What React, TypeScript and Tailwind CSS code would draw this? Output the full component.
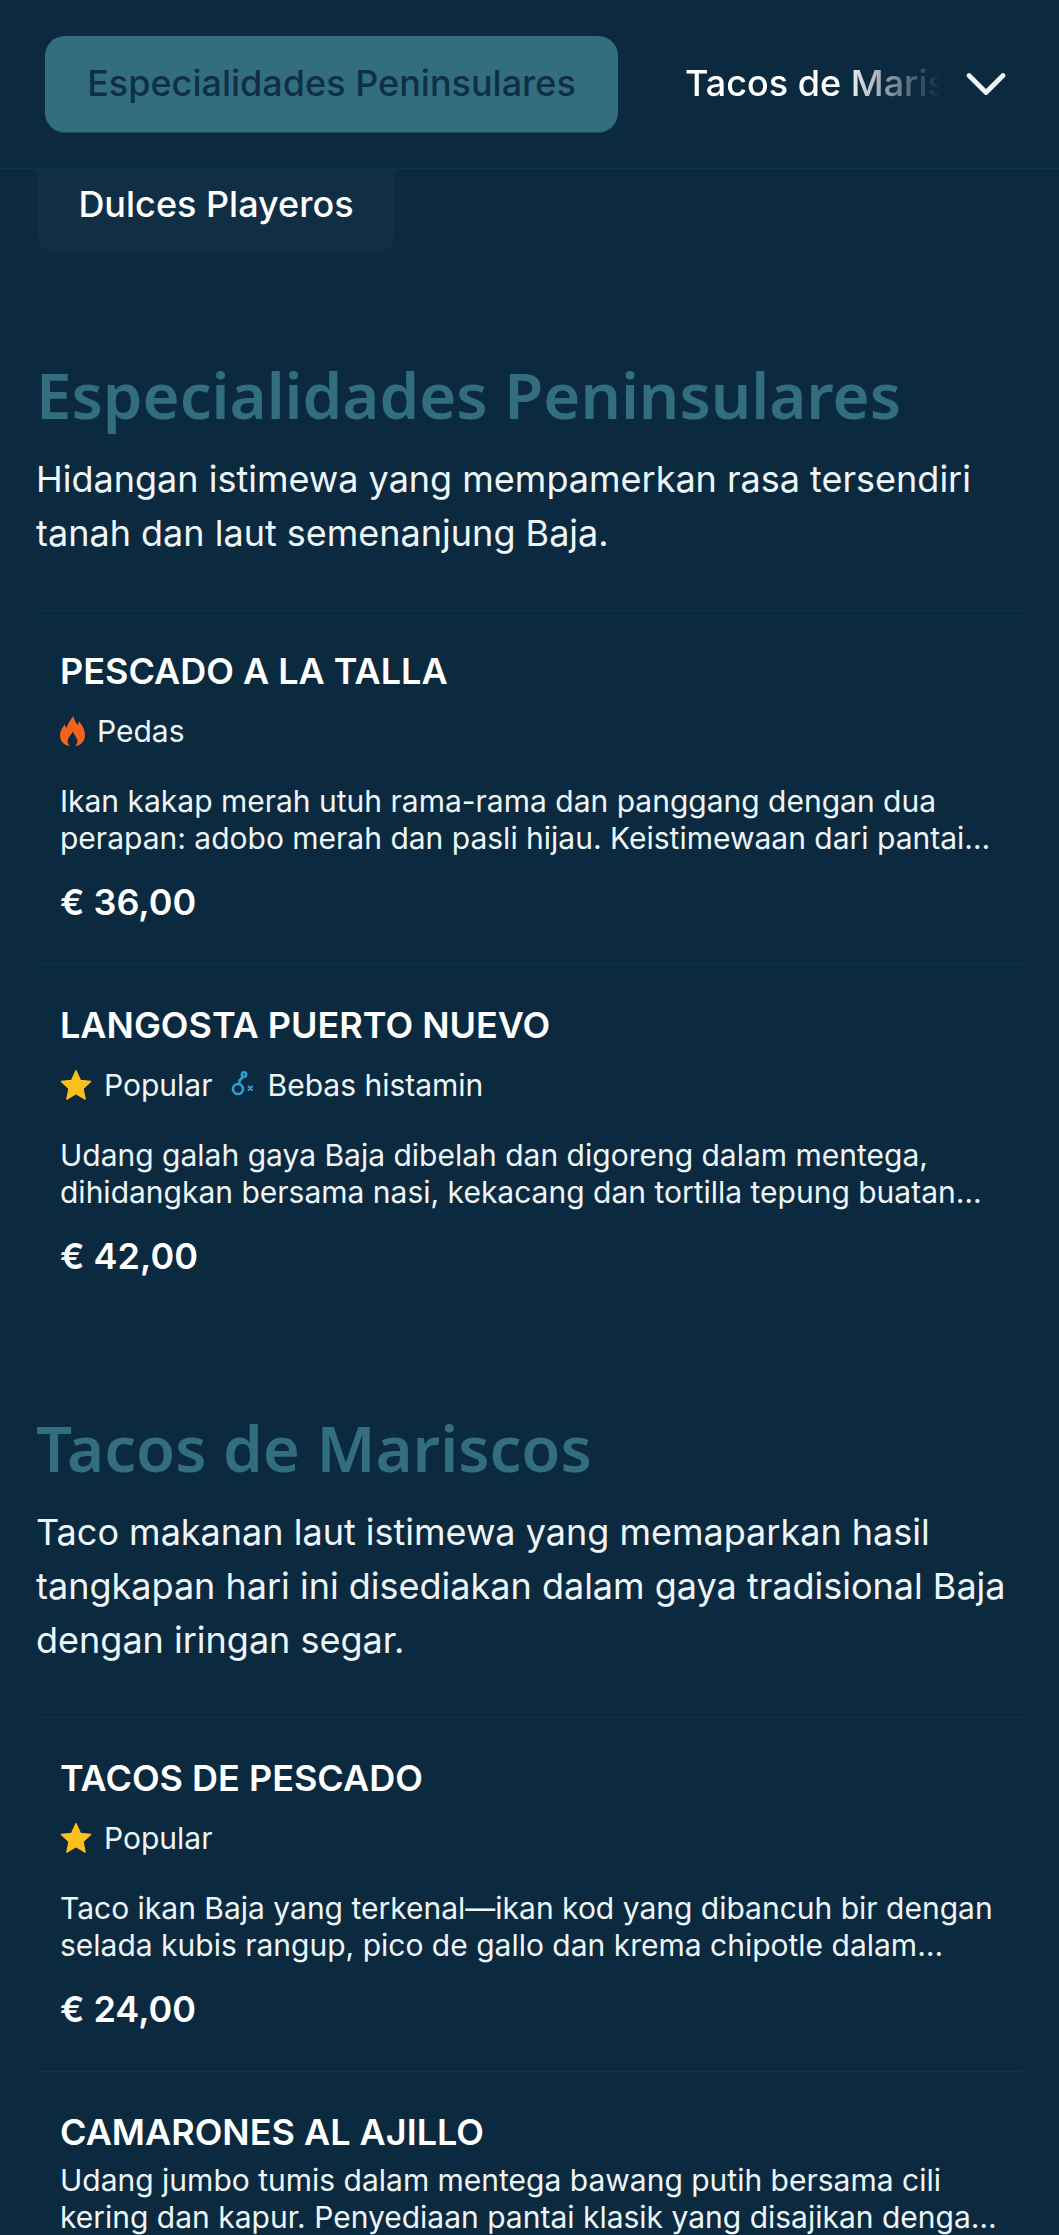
import { ChevronDown } from 'lucide-react';

function FlameIcon() {
  return (
    <svg viewBox="0 0 26 30" className="h-[30px] w-[25px] shrink-0 text-[#f4631e]" fill="currentColor" preserveAspectRatio="none">
      <path
        fillRule="evenodd"
        d="M14 0 C14.5 4 16.5 6.5 18 9 C19 7.8 19.6 6.8 19.8 5.5 C23.5 9.5 26 14 26 19 C26 25.5 21 30 15.5 30 C17.5 28.5 18.5 26.5 18 24 C17.4 21 14.5 19 13.5 15.5 C12 18.5 8.5 21 8 24.5 C7.7 27 8.8 28.8 10.5 30 C5 30 0 25.5 0 19.5 C0 15 2.5 11.5 5 8.5 C5.5 10 6 11 7 12 C8 7.5 11 3.5 14 0 Z"
      />
    </svg>
  );
}

function StarIcon() {
  return (
    <svg viewBox="0 0 30 30" className="h-[32px] w-[32px] shrink-0 text-[#fcc01e]" fill="currentColor" stroke="currentColor" strokeWidth="1.2" strokeLinejoin="round">
      <path d="M15 1.5 L19.1 10.6 L28.8 11.7 L21.6 18.4 L23.6 28.2 L15 23.2 L6.4 28.2 L8.4 18.4 L1.2 11.7 L10.9 10.6 Z" />
    </svg>
  );
}

function HistamineIcon() {
  return (
    <svg viewBox="0 0 26 30" className="h-[30px] w-[26px] shrink-0 text-[#2a9fd6]" fill="none" stroke="currentColor" strokeWidth="2.6" strokeLinecap="round">
      <circle cx="8" cy="19" r="5" />
      <path d="M9.5 14 L9.5 10.5 L13 7" />
      <circle cx="14" cy="4.5" r="2.2" />
      <path d="M18.5 16.5 L22 20 M22 16.5 L18.5 20" strokeWidth="2" />
    </svg>
  );
}

const tagIcons = {
  Pedas: <FlameIcon />,
  Popular: <StarIcon />,
  'Bebas histamin': <HistamineIcon />,
};

type Tag = keyof typeof tagIcons;

interface Dish {
  name: string;
  tags: Tag[];
  desc: string;
  price?: string;
}

function DishCard({ dish }: { dish: Dish }) {
  return (
    <div className="border-t border-[#12324a] pt-[38px] pr-[23px] pb-[39px] pl-[20px]">
      <h3 className="text-[36px] leading-[44px] font-semibold text-white">{dish.name}</h3>
      {dish.tags.length > 0 && (
        <div className="mt-[16px] flex h-[44px] items-center gap-[17px]">
          {dish.tags.map((t) => (
            <span key={t} className="flex items-center gap-[12px] text-[30px] text-[#eef6fa]">
              {tagIcons[t]}
              {t}
            </span>
          ))}
        </div>
      )}
      <p className={`${dish.tags.length > 0 ? 'mt-[30px]' : 'mt-[8px]'} line-clamp-2 text-[30px] leading-[37px] text-[#eef6fa]`}>
        {dish.desc}
      </p>
      {dish.price && <p className="mt-[22px] text-[36px] leading-[46px] font-semibold text-white">{dish.price}</p>}
    </div>
  );
}

function Section({ title, desc, dishes }: { title: string; desc: string; dishes: Dish[] }) {
  return (
    <section className="pb-[88px]">
      <h2 className="px-[36px] font-['Noto_Sans'] text-[63.5px] leading-[84px] font-semibold text-[#336e80]">{title}</h2>
      <p className="mt-[15px] px-[36px] text-[36px] leading-[54px] text-[#eef6fa]">{desc}</p>
      <div className="mt-[50px] mr-[36px] ml-[40px]">
        {dishes.map((d) => (
          <DishCard key={d.name} dish={d} />
        ))}
      </div>
    </section>
  );
}

export default function App() {
  return (
    <div className="h-[2235px] w-[1059px] overflow-hidden bg-[#0c2a3f] font-['Inter',sans-serif]">
      {/* Tabs */}
      <div className="flex h-[169px] items-start border-b border-[#12324a] pt-[36px] pl-[45px]">
        <div className="flex h-[96px] w-[573px] items-center justify-center rounded-[20px] bg-[#336e80] pb-[2px] text-[36px] font-medium text-[#0f2f47] shadow-[0_1px_0_#1f5164]">
          Especialidades Peninsulares
        </div>
        <div className="ml-[67px] flex h-[96px] w-[255px] items-center overflow-hidden pb-[2px] text-[36px] font-medium whitespace-nowrap text-white [mask-image:linear-gradient(to_right,black_62%,transparent_100%)]">
          Tacos de Mariscos
        </div>
        <div className="ml-[12px] flex h-[96px] items-center">
          <ChevronDown size={68} strokeWidth={1.7} className="text-[#eef6fa]" />
        </div>
      </div>

      <div className="ml-[37px] flex h-[84px] w-[358px] items-center justify-center rounded-b-[20px] bg-[#102f45] pb-[14px] text-[36px] font-medium text-white">
        Dulces Playeros
      </div>

      <div className="mt-[100px]">
        <Section
          title="Especialidades Peninsulares"
          desc="Hidangan istimewa yang mempamerkan rasa tersendiri tanah dan laut semenanjung Baja."
          dishes={[
            {
              name: 'PESCADO A LA TALLA',
              tags: ['Pedas'],
              desc: 'Ikan kakap merah utuh rama-rama dan panggang dengan dua perapan: adobo merah dan pasli hijau. Keistimewaan dari pantai Baja yang dihidangkan bersama nasi dan salad segar.',
              price: '€ 36,00',
            },
            {
              name: 'LANGOSTA PUERTO NUEVO',
              tags: ['Popular', 'Bebas histamin'],
              desc: 'Udang galah gaya Baja dibelah dan digoreng dalam mentega, dihidangkan bersama nasi, kekacang dan tortilla tepung buatan sendiri yang masih hangat dan lembut.',
              price: '€ 42,00',
            },
          ]}
        />
        <Section
          title="Tacos de Mariscos"
          desc="Taco makanan laut istimewa yang memaparkan hasil tangkapan hari ini disediakan dalam gaya tradisional Baja dengan iringan segar."
          dishes={[
            {
              name: 'TACOS DE PESCADO',
              tags: ['Popular'],
              desc: 'Taco ikan Baja yang terkenal—ikan kod yang dibancuh bir dengan selada kubis rangup, pico de gallo dan krema chipotle dalam tortilla jagung yang dibuat segar setiap hari.',
              price: '€ 24,00',
            },
            {
              name: 'CAMARONES AL AJILLO',
              tags: [],
              desc: 'Udang jumbo tumis dalam mentega bawang putih bersama cili kering dan kapur. Penyediaan pantai klasik yang disajikan dengan nasi dan tortilla hangat buatan sendiri.',
            },
          ]}
        />
      </div>
    </div>
  );
}
